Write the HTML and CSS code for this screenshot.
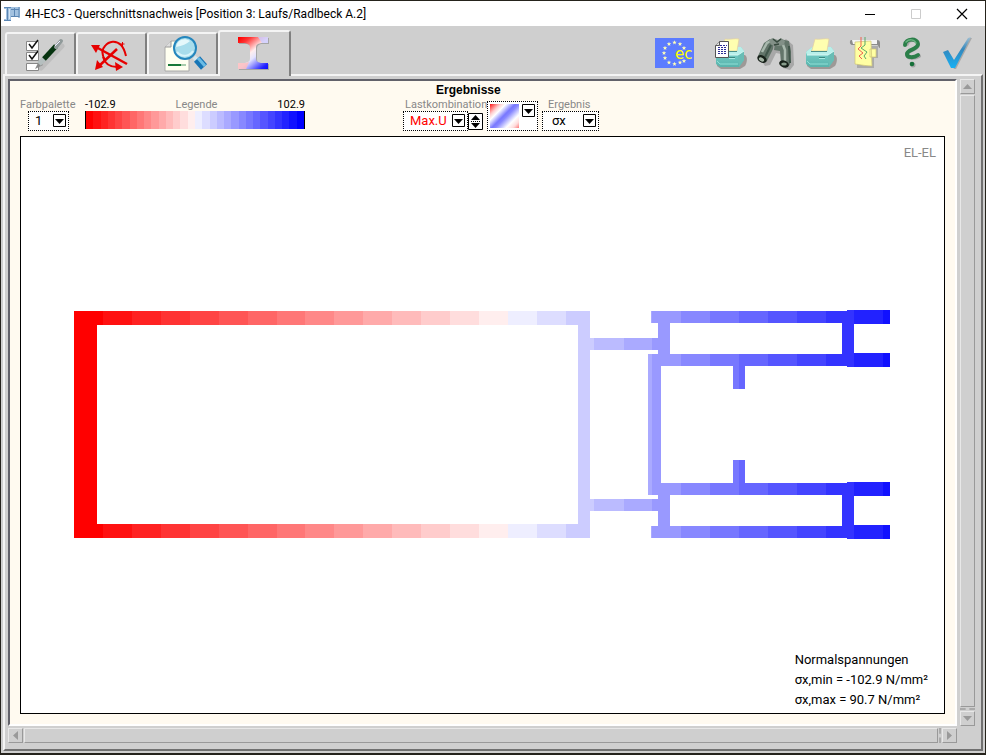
FILE: index.html
```html
<!DOCTYPE html>
<html lang="de">
<head>
<meta charset="utf-8">
<title>4H-EC3 - Querschnittsnachweis</title>
<link rel="stylesheet" href="styles.css">
</head>
<body>
<header class="titlebar">
  <svg class="app-icon" width="17" height="16" viewBox="0 0 17 16" aria-hidden="true">
    <path d="M0 1h16v10H7v4H0v-2h2V3H0z" fill="#a3c2e0"/>
    <path d="M0 1.500h7M0 14.500h7M3.500 1v13M7 3.500h8M7 10.500h8M10.500 2v8M15 1v11" stroke="#5b86b3" fill="none"/>
    <path d="M5.500 3v10" stroke="#d5e6f5"/>
  </svg>
  <h1 class="caption">4H-EC3 - Querschnittsnachweis [Position 3: Laufs/Radlbeck A.2]</h1>
  <div class="window-buttons">
    <button aria-label="Minimieren"><svg width="12" height="12" viewBox="0 0 12 12"><path d="M1 6.500h10" stroke="#000"/></svg></button>
    <button aria-label="Maximieren" disabled><svg width="12" height="12" viewBox="0 0 12 12"><path d="M1.500 1.500h9v9h-9z" stroke="#ccc" fill="none"/></svg></button>
    <button aria-label="Schließen"><svg width="12" height="12" viewBox="0 0 12 12"><path d="M1 1l10 10M11 1L1 11" stroke="#000" stroke-width="1.200"/></svg></button>
  </div>
</header>

<div class="toolbar">
  <nav class="tabs">
    <button class="tab" aria-label="Eingabe">
      <svg width="67" height="40" viewBox="0 0 67 40">
        <g fill="#fff" stroke="#888"><path d="M19.500 7.500h12v9h-12zM19.500 18.500h12v8h-12zM19.500 29.500h12v7h-12z"/></g>
        <path d="M22 10l3 4 6-8M22 21l3 4 6-8" fill="none" stroke="#111" stroke-width="1.500"/>
        <path d="M34 34L55 12" stroke="#999" stroke-width="5" stroke-linecap="round" opacity=".3"/>
        <path d="M28 35l4-8 4 4z" fill="#888"/>
        <path d="M32 30l6-6" stroke="#b5bfbf" stroke-width="5"/>
        <path d="M37 25l12-13" stroke="#06330f" stroke-width="5"/>
        <path d="M49 13l5-6" stroke="#909a9a" stroke-width="4" stroke-linecap="round"/>
        <path d="M48 12l5-5" stroke="#eef"/>
      </svg>
    </button>
    <button class="tab" aria-label="Schnittgrößen">
      <svg width="67" height="40" viewBox="0 0 67 40">
        <g fill="none" stroke="#e60000" stroke-width="2">
          <path d="M18 13l31 17" stroke-width="2.500"/><path d="M20 33l19-18" stroke-width="2.500"/>
          <path d="M27 26c-3-5-4-10 0-14 4-5 11-6 16-1 3 3 4 7 5 11"/>
          <path d="M25 23c2 7 7 10 14 10"/>
        </g>
        <path d="M13 11h9l-4 8zM17 36l2-10 6 7zM45 33l-8-5 1 9z" fill="#e60000"/><path d="M42.500 10h4M44.500 8v4" stroke="#e60000"/>
      </svg>
    </button>
    <button class="tab" aria-label="Vorschau">
      <svg width="67" height="40" viewBox="0 0 67 40">
        <path d="M22 7h18v30H16V13z" fill="#fffff0" stroke="#aaa"/>
        <path d="M16 13h6V7" fill="#ddd" stroke="#999"/>
        <path d="M19 31h17" stroke="#187838" stroke-width="2"/><path d="M32 31h5" stroke="#a8ccac" stroke-width="2"/>
        <path d="M45 23l4 4" stroke="#d3e8ef" stroke-width="4"/>
        <path d="M48 25l7 8" stroke="#1775b6" stroke-width="8"/>
        <path d="M49 24l7 8" stroke="#6bbce5" stroke-width="3"/>
        <circle cx="36" cy="14" r="11" fill="#a8ddec" stroke="#2486bd" stroke-width="2"/>
        <path d="M27 13c1-7 8-10 14-6-3 3-8 5-14 6z" fill="#e5f8fb"/>
        <path d="M28 18c5 6 13 4 16-1" stroke="#d8f4fa" fill="none" stroke-width="2"/>
      </svg>
    </button>
    <button class="tab tab-active" aria-label="Ergebnisse">
      <svg width="67" height="40" viewBox="0 0 67 40">
        <defs>
          <linearGradient id="beam" gradientUnits="userSpaceOnUse" x1="20" y1="5" x2="48" y2="40">
            <stop offset="0" stop-color="#f00"/><stop offset=".15" stop-color="#f33"/><stop offset=".42" stop-color="#fee"/><stop offset=".55" stop-color="#e4e4ff"/><stop offset=".85" stop-color="#22f"/><stop offset="1" stop-color="#00f"/>
          </linearGradient>
        </defs>
        <path d="M19 6h30v6h-8c-3 1-4 2-4 5v10c0 3 1 4 4 5h8v6H19v-6h8c3-1 4-2 4-5V17c0-3-1-4-4-5h-8z" fill="#8a8a8a" opacity=".6"/>
        <path d="M18 5h30v6h-7c-4 1-5 2-5 5v10c0 3 1 4 5 5h7v6H18v-6h7c4-1 5-2 5-5V16c0-3-1-4-5-5h-7z" fill="url(#beam)"/>
        <path d="M18 31h7l4-1-3 7h-8z" fill="#fbb" opacity=".8"/>
        <path d="M38 5h10v6h-6z" fill="#ccf" opacity=".8"/>
      </svg>
    </button>
  </nav>

  <div class="tools">
    <button class="tool-ec" aria-label="Eurocode">
      <svg width="39" height="30" viewBox="0 0 39 30">
        <defs><path id="star" d="M0-2.200L.6-.7 2.200-.7 .9.400 1.400 2 0 1-1.400 2-.9.400-2.200-.7-.6-.7z"/></defs>
        <g fill="#ffffb8"><use href="#star" x="19.500" y="4.500"/><use href="#star" x="25" y="6"/><use href="#star" x="29" y="10"/><use href="#star" x="14" y="6"/><use href="#star" x="10" y="10"/><use href="#star" x="9" y="15"/><use href="#star" x="10" y="20"/><use href="#star" x="14" y="24.500"/><use href="#star" x="19.500" y="26"/><use href="#star" x="25" y="24.500"/><use href="#star" x="29" y="23"/></g>
        <text class="ec-text" x="20" y="21">ec</text>
      </svg>
    </button>
    <button class="tool" aria-label="Druckliste">
      <svg width="45" height="42" viewBox="0 0 45 42">
        <defs>
          <linearGradient id="face" x2="0" y2="1"><stop offset="0" stop-color="#7fd6cf"/><stop offset="1" stop-color="#59b3ac"/></linearGradient>
          <g id="printer">
            <path d="M9 25h28c3 2 2 8 0 11l-5 3H13l-4-3z" fill="#6b6460" opacity=".5"/>
            <path d="M8 22l6-5h19l3 4v9l-5 7H12l-4-3z" fill="url(#face)"/>
            <path d="M8 22l6-5h19l3 4-6 4H9z" fill="#b9f0ea"/>
            <path d="M36 21v9l-5 7-1-12z" fill="#68bdb5"/>
            <path d="M9 25h21l6-4" fill="none" stroke="#d5f8f3"/>
            <path d="M9 31l3 3h18" fill="none" stroke="#8fdfd6"/>
            <path d="M14 20l3-11c5 1 9-1 14 0l-2 12H13z" fill="#ffffb0" stroke="#e2cfa0" stroke-width=".7"/>
            <path d="M13 21.500h16" stroke="#4a8f8a"/>
            <path d="M21 27.500h6" stroke="#3b8881"/><path d="M21 28.500h6" stroke="#a7ece4"/>
          </g>
        </defs>
        <use href="#printer"/>
        <path d="M11.500 11.500h9v16h-13v-12z" fill="#fff" stroke="#555"/>
        <path d="M7.500 15.500h4v-4" fill="#ddd" stroke="#555"/>
        <path d="M10 17.500h9M10 19.500h9M10 21.500h9M10 23.500h9M12 15.500h7" stroke="#2d2d94" stroke-dasharray="2 1"/>
      </svg>
    </button>
    <button class="tool" aria-label="Suchen">
      <svg width="45" height="42" viewBox="0 0 45 42">
        <path d="M8 30l5-13 8-6 4 4 8-6 7 6 1 20-4 5-7-2-2-14-5-1-6 12-5 1z" fill="#777" opacity=".45"/>
        <path d="M5 26l6-13 6-4 4 3-1 7-6 12c-4 3-9 0-9-5z" fill="#63756a"/>
        <path d="M22 13l5-4 9 2 2 11-1 12c-1 4-8 4-9 0l-1-13-6-1z" fill="#63756a"/>
        <path d="M9 22l5-9 4-2M29 12l3 8v12" fill="none" stroke="#a9b9ae" stroke-width="2.500"/>
        <path d="M16 12l3-4 6 2 3-2 4 3-1 4-5 1-7-1z" fill="#829087"/><path d="M20 9l4 3 4-3M21 15l5-1" stroke="#36483d" stroke-width="1.500" fill="none"/>
        <path d="M36 16l1 17M18 15l-6 12" stroke="#40564a" stroke-width="2" fill="none"/>
        <ellipse cx="9" cy="29" rx="5" ry="3.500" transform="rotate(30 9 29)" fill="#162018"/><ellipse cx="8.500" cy="29.500" rx="2.800" ry="1.800" transform="rotate(30 8.500 29.500)" fill="#a5b4a5"/>
        <ellipse cx="31" cy="34" rx="5" ry="3.500" transform="rotate(20 31 34)" fill="#162018"/><ellipse cx="31" cy="34" rx="2.800" ry="1.600" fill="#879c8b"/>
      </svg>
    </button>
    <button class="tool" aria-label="Drucken"><svg width="45" height="42" viewBox="0 0 45 42"><use href="#printer"/></svg></button>
    <button class="tool" aria-label="Plot">
      <svg width="45" height="42" viewBox="0 0 45 42">
        <path d="M14 16h21v12h-4v10H14z" fill="#888" opacity=".5"/>
        <path d="M8 10h26c2 0 3 1 3 3v5c-2 0-1-3-3-3H9c-2 0-3-4-1-5z" fill="#8c8c8c"/>
        <path d="M9 10h25v4H10z" fill="#f4f4f4"/>
        <path d="M27 19h6v8h-6zM12 12l16-1 1 25c-5 0-10-1-17-2z" fill="#ffffa3" stroke="#cfc477" stroke-width=".7"/>
        <path d="M18 7v9l-3 3 5 4-4 3 3 3" fill="none" stroke="#ef6251"/><path d="M22 7v8l-4 3 6 4-3 4 2 3" fill="none" stroke="#59a968"/>
      </svg>
    </button>
    <button class="tool" aria-label="Hilfe">
      <svg width="45" height="42" viewBox="0 0 45 42">
        <g fill="none" stroke-linecap="round"><path d="M19 14c1-6 12-5 11 1-1 5-12 5-11 10 1 4 9 3 12 1" stroke="#888" stroke-width="4" opacity=".6"/>
        <path d="M17 15c0-7 13-7 13-1 0 6-11 5-11 10 0 4 7 4 11 1" stroke="#2b7f49" stroke-width="4"/><path d="M18 12c3-3 8-3 10 1" stroke="#69b380" stroke-width="1.500"/></g>
        <circle cx="25" cy="35" r="2.500" fill="#888" opacity=".6"/><circle cx="24" cy="34" r="2.300" fill="#167039"/>
      </svg>
    </button>
    <button class="tool" aria-label="Übernehmen">
      <svg width="45" height="42" viewBox="0 0 45 42">
        <defs><linearGradient id="tick" x2="0" y2="1"><stop offset="0" stop-color="#a1bfd2"/><stop offset=".4" stop-color="#3488bd"/><stop offset="1" stop-color="#16b0f4"/></linearGradient></defs>
        <path d="M12 24l4-1 5 8L36 8h3L23 39h-2z" fill="#888" opacity=".55"/>
        <path d="M10 22l5-2 6 10L35 8l3-1L22 38h-4z" fill="url(#tick)"/>
      </svg>
    </button>
  </div>
</div>

<main class="panel">
  <section class="view">
    <div class="controls">
      <div class="palette">
        <label for="palette">Farbpalette</label>
        <span class="combo"><select id="palette"><option>1</option></select><svg class="arrow" viewBox="0 0 13 13"><path d="M.5.500h12v12H.500z" fill="#fff" stroke="#000"/><path d="M2 5h9l-4.500 5z"/></svg></span>
      </div>
      <div class="legend">
        <div class="legend-text"><span>-102.9</span><span class="muted">Legende</span><span>102.9</span></div>
        <svg class="legend-bar" viewBox="0 0 30 1" preserveAspectRatio="none" shape-rendering="crispEdges" aria-hidden="true">
          <path fill="#f00" d="M0 0h30v1H0z"/><path fill="#f11" d="M1 0h29v1H1z"/><path fill="#f22" d="M2 0h28v1H2z"/><path fill="#f33" d="M3 0h27v1H3z"/><path fill="#f44" d="M4 0h26v1H4z"/><path fill="#f55" d="M5 0h25v1H5z"/><path fill="#f66" d="M6 0h24v1H6z"/><path fill="#f77" d="M7 0h23v1H7z"/><path fill="#f88" d="M8 0h22v1H8z"/><path fill="#f99" d="M9 0h21v1H9z"/><path fill="#faa" d="M10 0h20v1H10z"/><path fill="#fbb" d="M11 0h19v1H11z"/><path fill="#fcc" d="M12 0h18v1H12z"/><path fill="#fdd" d="M13 0h17v1H13z"/><path fill="#fee" d="M14 0h16v1H14z"/>
          <path fill="#eef" d="M15 0h15v1H15z"/><path fill="#ddf" d="M16 0h14v1H16z"/><path fill="#ccf" d="M17 0h13v1H17z"/><path fill="#bbf" d="M18 0h12v1H18z"/><path fill="#aaf" d="M19 0h11v1H19z"/><path fill="#99f" d="M20 0h10v1H20z"/><path fill="#88f" d="M21 0h9v1H21z"/><path fill="#77f" d="M22 0h8v1H22z"/><path fill="#66f" d="M23 0h7v1H23z"/><path fill="#55f" d="M24 0h6v1H24z"/><path fill="#44f" d="M25 0h5v1H25z"/><path fill="#33f" d="M26 0h4v1H26z"/><path fill="#22f" d="M27 0h3v1H27z"/><path fill="#11f" d="M28 0h2v1H28z"/><path fill="#00f" d="M29 0h1v1H29z"/>
        </svg>
      </div>
      <div class="results">
        <h2>Ergebnisse</h2>
        <div class="result-row">
          <div class="field load">
            <label for="load">Lastkombination</label>
            <div class="load-row">
              <span class="combo"><select id="load" class="red"><option>Max.U</option></select><svg class="arrow" viewBox="0 0 13 13"><path d="M.5.500h12v12H.500z" fill="#fff" stroke="#000"/><path d="M2 5h9l-4.500 5z"/></svg></span>
              <button class="spin" aria-label="Nächste Kombination"><svg width="15" height="17" viewBox="0 0 15 17"><path d="M.5.500h14v16H.500z" fill="#fff" stroke="#000"/><path d="M3 7h9L7.500 2zM3 10h9l-4.500 5z"/><path d="M3 8.500h9" stroke="#000" stroke-dasharray="1 1"/></svg></button>
            </div>
          </div>
          <button class="plot-type" aria-label="Darstellung"><span class="swatch"></span><svg class="arrow" viewBox="0 0 13 13"><path d="M.5.500h12v12H.500z" fill="#fff" stroke="#000"/><path d="M2 5h9l-4.500 5z"/></svg></button>
          <div class="field stress">
            <label for="stress">Ergebnis</label>
            <span class="combo"><select id="stress"><option>σx</option></select><svg class="arrow" viewBox="0 0 13 13"><path d="M.5.500h12v12H.500z" fill="#fff" stroke="#000"/><path d="M2 5h9l-4.500 5z"/></svg></span>
          </div>
        </div>
      </div>
    </div>

    <div class="plot">
      <svg class="section" viewBox="21 137 923 576" shape-rendering="crispEdges" role="img" aria-label="Normalspannungen im Querschnitt">
        <defs>
          <clipPath id="profile">
            <path d="M74 311h23v227H74zM74 311h516v14H74zM74 524h516v14H74zM578 311h12v227h-12z"/>
            <path d="M590 338h70v12h-70zM590 499h70v12h-70zM658 311h12v55h-12zM658 483h12v55h-12zM648 354h13v141h-13z"/>
            <path d="M651 311h203v12H651zM651 354h203v12H651zM651 483h203v12H651zM651 526h203v12H651zM842 311h12v55h-12zM842 483h12v55h-12z"/>
            <path d="M847 310h43v14h-43zM847 353h43v14h-43zM847 482h43v14h-43zM847 525h43v14h-43zM733 360h12v29h-12zM733 460h12v29h-12z"/>
          </clipPath>
        </defs>
        <g clip-path="url(#profile)">
          <path fill="#f00" d="M74 310h816v229H74z"/><path fill="#f11" d="M103 310h787v229H103z"/><path fill="#f22" d="M132 310h758v229H132z"/><path fill="#f33" d="M161 310h729v229H161z"/><path fill="#f44" d="M190 310h700v229H190z"/><path fill="#f55" d="M219 310h671v229H219z"/><path fill="#f66" d="M248 310h642v229H248z"/><path fill="#f77" d="M277 310h613v229H277z"/><path fill="#f88" d="M305 310h585v229H305z"/><path fill="#f99" d="M334 310h556v229H334z"/><path fill="#faa" d="M363 310h527v229H363z"/><path fill="#fbb" d="M392 310h498v229H392z"/><path fill="#fcc" d="M421 310h469v229H421z"/><path fill="#fdd" d="M450 310h440v229H450z"/><path fill="#fee" d="M479 310h411v229H479z"/>
          <path fill="#eef" d="M508 310h382v229H508z"/><path fill="#ddf" d="M537 310h353v229H537z"/><path fill="#ccf" d="M566 310h324v229H566z"/><path fill="#bbf" d="M594 310h296v229H594z"/><path fill="#aaf" d="M624 310h266v229H624z"/><path fill="#99f" d="M652 310h238v229H652z"/><path fill="#88f" d="M681 310h209v229H681z"/><path fill="#77f" d="M710 310h180v229H710z"/><path fill="#66f" d="M739 310h151v229H739z"/><path fill="#55f" d="M768 310h122v229H768z"/><path fill="#44f" d="M797 310h93v229H797z"/><path fill="#33f" d="M826 310h64v229H826z"/><path fill="#22f" d="M854 310h36v229H854z"/><path fill="#11f" d="M883 310h7v229H883z"/>
        </g>
      </svg>
      <p class="method">EL-EL</p>
      <div class="summary"><p>Normalspannungen</p><p>σx,min = -102.9 N/mm²</p><p>σx,max = 90.7 N/mm²</p></div>
    </div>
  </section>

  <div class="vscroll">
    <button aria-label="Nach oben"><svg width="11" height="11" viewBox="0 0 11 11"><path d="M1 8h9L5.500 3z"/></svg></button>
    <span class="thumb"></span><span class="grip"></span>
    <button aria-label="Nach unten"><svg width="11" height="11" viewBox="0 0 11 11"><path d="M1 3h9L5.500 8z"/></svg></button>
  </div>
  <div class="hscroll">
    <button aria-label="Nach links"><svg width="11" height="11" viewBox="0 0 11 11"><path d="M8 1v9L3 5.500z"/></svg></button>
    <span class="thumb"></span><span class="grip"></span>
    <button aria-label="Nach rechts"><svg width="11" height="11" viewBox="0 0 11 11"><path d="M3 1v9l5-4.500z"/></svg></button>
  </div>
</main>
</body>
</html>
```
FILE: styles.css
```css
* { box-sizing: border-box; }
body {
  margin: 0;
  height: 100vh;
  display: flex;
  flex-direction: column;
  border: 1px solid #25231c;
  border-bottom-width: 2px;
  background: #cfcfcf;
  color: #000;
  font: 13px/20px Roboto, sans-serif;
  overflow: hidden;
}
h1, h2, p { margin: 0; }
button { margin: 0; padding: 0; border: 0; background: none; font: inherit; }
svg { display: block; flex: none; }

.titlebar { display: flex; align-items: center; height: 25px; flex: none; background: #fff; padding-left: 3px; }
.caption { margin-left: 4px; font: 12px/24px Roboto, sans-serif; }
.window-buttons { display: flex; margin-left: auto; }
.window-buttons button { width: 46px; height: 25px; display: grid; place-items: center; }

.toolbar { display: flex; justify-content: space-between; align-items: flex-end; height: 48px; flex: none; padding: 0 7px 0 4px; }
.tabs { display: flex; align-items: flex-end; }
.tab {
  width: 71px;
  height: 42px;
  border: 2px solid #f4f4f4;
  border-right-color: #808080;
  border-bottom: 0;
  border-radius: 3px 3px 0 0;
  background: #cfcfcf;
}
.tab-active { position: relative; width: 73px; height: 46px; margin-bottom: -2px; padding-bottom: 4px; }
.tools { display: flex; align-items: center; height: 48px; padding-top: 2px; }
.tool { width: 45px; }
.tool-ec { width: 39px; margin: 4px 14px 0 0; background: #5c7cff; }
.ec-text { font: 15px "DejaVu Sans", sans-serif; fill: #ff0; }

.panel {
  flex: 1;
  min-height: 0;
  margin: 0 2px 2px;
  padding: 3px 6px 6px 3px;
  display: grid;
  grid-template: minmax(0, 1fr) 15px / minmax(0, 1fr) 15px;
  gap: 2px 3px;
  border: 2px solid #f4f4f4;
  border-right-color: #707070;
  border-bottom-color: #707070;
}
.view {
  display: flex;
  flex-direction: column;
  padding: 0 10px 10px;
  border: 2px solid #62626a;
  border-right-color: #fff;
  border-bottom-color: #fff;
  background: #fffaf0;
}
.controls { display: flex; align-items: flex-end; height: 55px; flex: none; padding-bottom: 5px; }
label, .legend-text { display: block; font-size: 11px; line-height: 13px; white-space: nowrap; }
label, .muted { color: #888; }
.palette { width: 65px; }
.palette .combo { width: 41px; margin-left: 8px; }
.combo { display: flex; position: relative; height: 20px; border: 1px dotted #000; background: #fff; }
.combo select {
  appearance: none;
  width: 100%;
  height: 18px;
  padding: 0 16px 0 6px;
  border: 0;
  background: none;
  font: 13px/18px Roboto, sans-serif;
  color: #000;
}
.combo .red { color: #f00; }
.arrow { width: 13px; height: 13px; }
.combo .arrow { position: absolute; top: 2px; right: 2px; pointer-events: none; }
.legend { width: 220px; }
.legend-text { display: flex; justify-content: space-between; }
.legend-bar { width: 100%; height: 18px; margin-bottom: 2px; border: 0 solid #000; border-width: 0 1px; }
.results { margin-left: 98px; }
.results h2 { margin-left: 33px; font: bold 12px/16px "Liberation Sans", sans-serif; }
.result-row { display: flex; align-items: flex-end; gap: 4px; }
.load-row { display: flex; align-items: center; }
.load { width: 80px; }
.load .combo { width: 65px; }
.plot-type { display: flex; justify-content: space-between; width: 51px; height: 30px; padding: 2px; border: 1px dotted #000; background: #fff; }
.swatch { width: 29px; height: 24px; background: linear-gradient(135deg, #f11 0, #fcc 20%, #fff 30%, #77f 48%, #88f 55%, #fff 75%, #fdd 88%, #f77 100%); }
.stress { width: 57px; }
.load label { padding-left: 2px; }
.stress label { padding-left: 6px; }
.stress select { padding-left: 9px; }

.plot { position: relative; flex: 1; min-height: 0; border: 1px solid #000; background: #fff; }
.section { width: 100%; height: 100%; }
.method { position: absolute; top: 6px; right: 8px; color: #888; }
.summary { position: absolute; right: 16px; bottom: 3px; }

.vscroll, .hscroll { display: flex; gap: 1px; }
.vscroll { flex-direction: column; }
.vscroll button, .hscroll button { width: 15px; height: 15px; flex: none; }
.vscroll button, .hscroll button, .thumb { border: 1px solid #e8e8e8; border-right-color: #999; border-bottom-color: #999; }
.vscroll svg, .hscroll svg { margin: 1px; fill: #999; }
.thumb { flex: 1; }
.vscroll .grip { height: 2px; border-top: 2px dashed #aaa; }
.hscroll .grip { width: 2px; border-left: 2px dashed #aaa; }
```
